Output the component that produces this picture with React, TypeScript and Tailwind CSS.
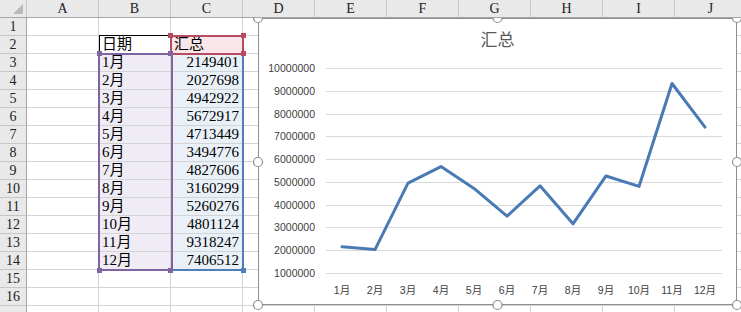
import React from "react";

const cols = ["A", "B", "C", "D", "E", "F", "G", "H", "I", "J"];
const values = [2149401, 2027698, 4942922, 5672917, 4713449, 3494776, 4827606, 3160299, 5260276, 4801124, 9318247, 7406512];
const months = values.map((_, i) => `${i + 1}月`);

const cellFont = { fontFamily: '"Liberation Serif", "Noto Sans CJK SC", serif' };
const chartFont = '"Liberation Sans", "Noto Sans CJK SC", sans-serif';

function cellInfo(row: number, col: string) {
  if (row === 2 && col === "B") return { text: "日期", bg: "bg-white", right: false };
  if (row === 2 && col === "C") return { text: "汇总", bg: "bg-[#f8e6ea]", right: false };
  if (row >= 3 && row <= 14 && col === "B") return { text: months[row - 3], bg: "bg-[#efecf5]", right: false };
  if (row >= 3 && row <= 14 && col === "C") return { text: String(values[row - 3]), bg: "bg-[#eaf0f8]", right: true };
  return { text: "", bg: "bg-white", right: false };
}

function Chart() {
  const yOf = (v: number) => 255 - ((v - 1000000) / 9000000) * 205;
  const xOf = (i: number) => 84 + 33 * i;
  const ticks = Array.from({ length: 10 }, (_, i) => (10 - i) * 1000000);
  const points = values.map((v, i) => `${xOf(i)},${yOf(v)}`).join(" ");
  const handles = [
    [0, 0], [239.5, 0], [479, 0],
    [0, 144], [479, 144],
    [0, 287], [239.5, 287], [479, 287],
  ];

  return (
    <div className="absolute left-[258px] top-[18px] w-[479px] h-[287px] bg-white z-10">
      <svg width="479" height="287" className="absolute left-0 top-0 overflow-visible">
        <rect x="0.5" y="0.5" width="478" height="286" fill="white" stroke="#8e8e8e" />
        <text x="239.5" y="28" textAnchor="middle" fontSize="17" fill="#595959" fontFamily={chartFont}>
          汇总
        </text>
        {ticks.map((t) => (
          <g key={t}>
            <line x1="68" x2="464" y1={Math.round(yOf(t)) + 0.5} y2={Math.round(yOf(t)) + 0.5} stroke="#d9d9d9" />
            <text x="57" y={yOf(t) + 4} textAnchor="end" fontSize="10.5" fill="#404040" fontFamily={chartFont}>
              {t}
            </text>
          </g>
        ))}
        {months.map((m, i) => (
          <text key={m} x={xOf(i)} y="276" textAnchor="middle" fontSize="10.5" fill="#404040" fontFamily={chartFont}>
            {m}
          </text>
        ))}
        <polyline points={points} fill="none" stroke="#4a7ab4" strokeWidth="3" strokeLinejoin="round" strokeLinecap="round" />
        {handles.map(([x, y], i) => (
          <circle key={i} cx={x} cy={y} r="4.5" fill="white" stroke="#8e8e8e" strokeWidth="1.2" />
        ))}
      </svg>
    </div>
  );
}

export default function App() {
  const rows = Array.from({ length: 17 }, (_, i) => i + 1);

  return (
    <div className="relative w-[741px] h-[312px] overflow-hidden bg-white">
      {/* Column headers */}
      <div className="relative z-20 flex h-[18px] bg-[#e9e9e9] border-b border-[#a6a6a6]" style={cellFont}>
        <div className="relative w-[27px] shrink-0 border-r border-[#c6c6c6]">
          <div className="absolute right-[3px] bottom-[3px] w-0 h-0 border-l-[10px] border-l-transparent border-b-[10px] border-b-[#b9b9b9]" />
        </div>
        {cols.map((c) => (
          <div key={c} className="w-[72px] shrink-0 flex items-center justify-center border-r border-[#c6c6c6] text-[14px] text-[#222]">
            {c}
          </div>
        ))}
      </div>

      {/* Rows */}
      {rows.map((r) => (
        <div key={r} className="flex h-[18px]" style={cellFont}>
          <div className="w-[27px] shrink-0 flex items-center justify-center bg-[#e9e9e9] border-r border-[#a6a6a6] border-b border-b-[#c6c6c6] text-[14px] text-[#222]">
            {r <= 16 ? r : ""}
          </div>
          {cols.map((c) => {
            const info = cellInfo(r, c);
            return (
              <div
                key={c}
                className={`w-[72px] shrink-0 flex items-end border-r border-b border-[#d4d4d4] text-[15px] leading-[17px] text-black px-[3px] ${info.bg} ${info.right ? "justify-end" : "justify-start"}`}
              >
                {info.text}
              </div>
            );
          })}
        </div>
      ))}

      {/* B2 black outline */}
      <div className="absolute left-[99px] top-[35px] w-[73px] h-[19px] border-t border-l border-black" />
      {/* C2 red range */}
      <div className="absolute left-[170px] top-[35px] w-[74px] h-[20px] border-2 border-[#b84a5f]" />
      {/* B3:B14 purple range */}
      <div className="absolute left-[98px] top-[53px] w-[75px] h-[218px] border-2 border-[#8064a2]" />
      {/* C3:C14 blue range */}
      <div className="absolute left-[171px] top-[53px] w-[73px] h-[218px] border-2 border-t-0 border-l-0 border-[#4f7fb8]" />

      {/* range handles */}
      <div className="absolute left-[168px] top-[33px] w-[5px] h-[5px] bg-[#b84a5f]" />
      <div className="absolute left-[241px] top-[33px] w-[5px] h-[5px] bg-[#b84a5f]" />
      <div className="absolute left-[241px] top-[51px] w-[5px] h-[5px] bg-[#b84a5f]" />
      <div className="absolute left-[97px] top-[51px] w-[5px] h-[5px] bg-[#8064a2]" />
      <div className="absolute left-[168px] top-[51px] w-[5px] h-[5px] bg-[#8064a2]" />
      <div className="absolute left-[97px] top-[268px] w-[5px] h-[5px] bg-[#8064a2]" />
      <div className="absolute left-[168px] top-[268px] w-[5px] h-[5px] bg-[#8064a2]" />
      <div className="absolute left-[241px] top-[268px] w-[5px] h-[5px] bg-[#4f7fb8]" />

      <Chart />
    </div>
  );
}
